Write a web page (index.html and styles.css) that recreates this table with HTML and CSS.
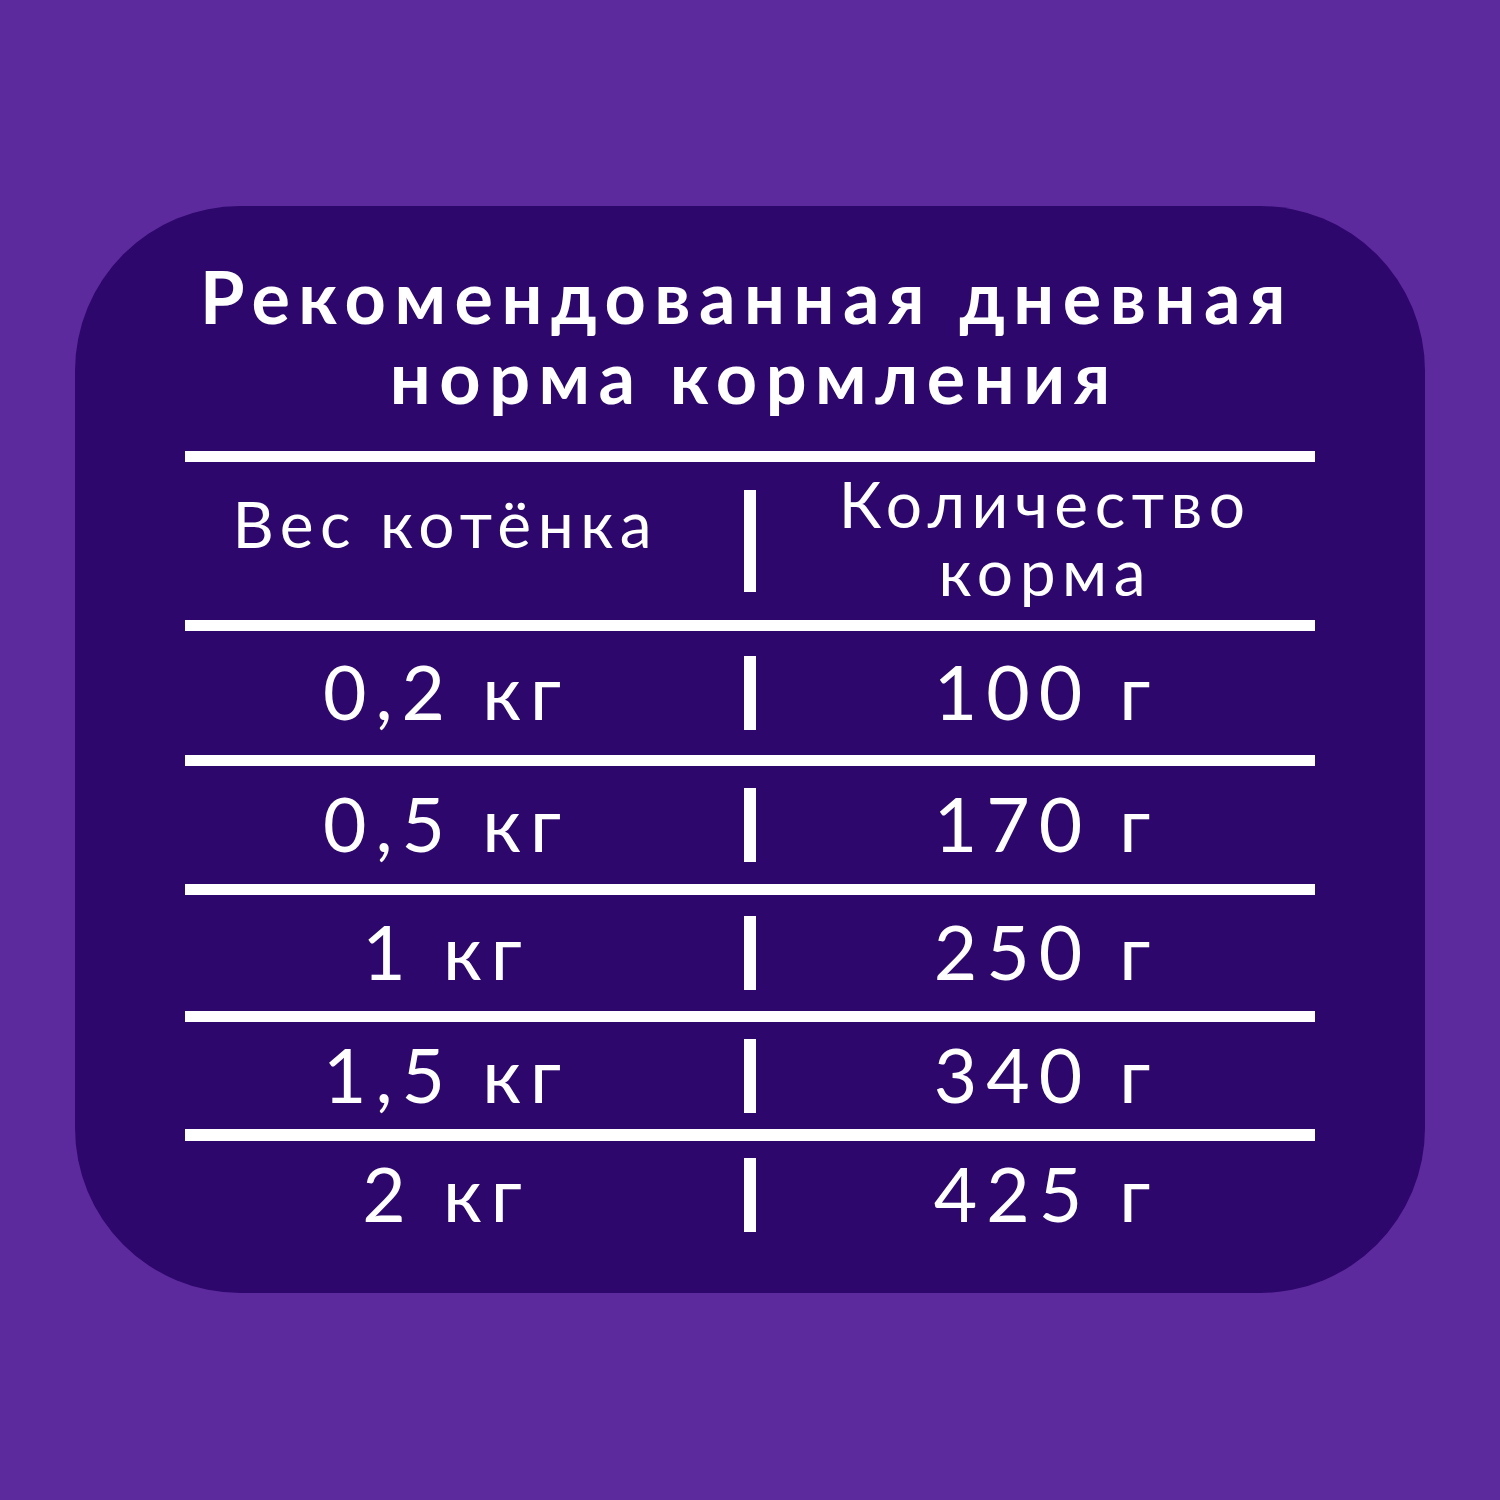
FILE: index.html
```html
<!DOCTYPE html>
<html lang="ru">
<head>
<meta charset="utf-8">
<title>Рекомендованная дневная норма кормления</title>
<link rel="stylesheet" href="styles.css">
</head>
<body>
<div class="page">
  <div class="card">
    <h1 class="title">
      <span class="title-line title-line-1">Рекомендованная дневная</span>
      <span class="title-line">норма кормления</span>
    </h1>
    <div class="table">
      <div class="row row-head">
        <div class="cell cell-left head-text head-left">Вес котёнка</div>
        <div class="divider divider-head"></div>
        <div class="cell cell-right head-text head-right">
          <span class="head-line">Количество</span>
          <span class="head-line">корма</span>
        </div>
      </div>
      <div class="row row-1">
        <div class="cell cell-left">0,2 кг</div>
        <div class="divider"></div>
        <div class="cell cell-right">100 г</div>
      </div>
      <div class="row row-2">
        <div class="cell cell-left">0,5 кг</div>
        <div class="divider"></div>
        <div class="cell cell-right">170 г</div>
      </div>
      <div class="row row-3">
        <div class="cell cell-left">1 кг</div>
        <div class="divider"></div>
        <div class="cell cell-right">250 г</div>
      </div>
      <div class="row row-4">
        <div class="cell cell-left">1,5 кг</div>
        <div class="divider"></div>
        <div class="cell cell-right">340 г</div>
      </div>
      <div class="row row-5">
        <div class="cell cell-left">2 кг</div>
        <div class="divider"></div>
        <div class="cell cell-right">425 г</div>
      </div>
    </div>
  </div>
</div>
</body>
</html>
```

FILE: styles.css
```css
html, body {
  margin: 0;
  padding: 0;
}

body {
  background: #5d2a9e;
  font-family: "Lato", "Open Sans", sans-serif;
  color: #ffffff;
}

.page {
  width: 1500px;
  height: 1500px;
  padding: 206px 75px 0;
  box-sizing: border-box;
}

.card {
  width: 1350px;
  height: 1087px;
  background: #2d076b;
  border-radius: 165px;
  padding: 50px 110px 0;
  box-sizing: border-box;
}

.title {
  margin: 0 0 35px;
  font-size: 72px;
  line-height: 80px;
  font-weight: 700;
  letter-spacing: 8.5px;
  text-indent: 8.5px;
  text-align: center;
}

.title-line {
  display: block;
}

.title-line-1 {
  text-indent: -6px;
}

.table {
  display: flex;
  flex-direction: column;
}

.row {
  display: grid;
  grid-template-columns: 1fr 12px 1fr;
  align-items: center;
  border-top: 11px solid #ffffff;
  font-size: 75px;
  letter-spacing: 9px;
}

.row-head { height: 158px; }
.row-1 { height: 124px; }
.row-2 { height: 118px; }
.row-3 { height: 116px; }
.row-4 { height: 107px; }
.row-5 { height: 108px; border-top-width: 12px; }

.cell {
  text-align: center;
  line-height: 1.2;
  text-indent: 9px;
  padding-bottom: 4px;
}

.cell-left {
  padding-right: 45px;
}

.cell-right {
  padding-left: 13px;
}

.head-text {
  font-size: 64px;
  line-height: 68px;
  letter-spacing: 6.5px;
  text-indent: 6.5px;
}

.head-left {
  padding-bottom: 34px;
}

.head-right {
  display: flex;
  flex-direction: column;
  align-items: center;
  padding-bottom: 6px;
}

.head-line {
  display: block;
  height: 68px;
}

.divider {
  width: 12px;
  height: 74px;
  background: #ffffff;
}

.divider-head {
  height: 102px;
}
```
